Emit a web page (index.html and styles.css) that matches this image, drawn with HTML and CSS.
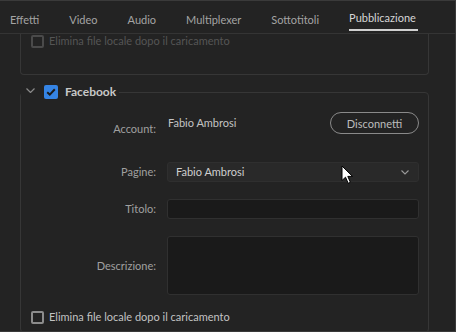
FILE: index.html
```html
<!DOCTYPE html>
<html lang="it">
  <head>
    <meta charset="UTF-8" />
    <title>Impostazioni esportazione</title>
    <link rel="stylesheet" href="styles.css">
  </head>
  <body>
    <div class="window">
      <nav class="tabs">
        <span class="tab">Effetti</span>
        <span class="tab">Video</span>
        <span class="tab">Audio</span>
        <span class="tab">Multiplexer</span>
        <span class="tab">Sottotitoli</span>
        <span class="tab active">Pubblicazione</span>
      </nav>

      <div class="content">
        <div class="group group-top">
          <label class="check-row disabled">
            <span class="box"></span>
            Elimina file locale dopo il caricamento
          </label>
        </div>

        <fieldset class="group">
          <legend>
            <svg class="chevron" width="9" height="5" viewBox="0 0 9 5">
              <path d="M0.5 0.5 L4.5 4.5 L8.5 0.5" fill="none" stroke="#8a8a8a" stroke-width="1.2" />
            </svg>
            <span class="box checked">
              <svg width="10" height="8" viewBox="0 0 10 8">
                <path d="M1.2 4.2 L3.8 6.6 L8.8 1.2" fill="none" stroke="#1b1b1b" stroke-width="2" />
              </svg>
            </span>
            <span class="legend-text">Facebook</span>
          </legend>

          <div class="form">
            <span class="label account">Account:</span>
            <div class="account-row">
              <span class="value">Fabio Ambrosi</span>
              <button class="pill">Disconnetti</button>
            </div>

            <span class="label">Pagine:</span>
            <div class="select">
              <span>Fabio Ambrosi</span>
              <svg width="8" height="5" viewBox="0 0 8 5">
                <path d="M0.5 0.5 L4 4 L7.5 0.5" fill="none" stroke="#9a9a9a" stroke-width="1.1" />
              </svg>
            </div>

            <span class="label">Titolo:</span>
            <div class="input"></div>

            <span class="label">Descrizione:</span>
            <div class="input textarea"></div>
          </div>

          <label class="check-row">
            <span class="box"></span>
            Elimina file locale dopo il caricamento
          </label>
        </fieldset>
      </div>

      <svg class="cursor" width="13" height="20" viewBox="0 0 13 20">
        <path d="M1 1 L1 15.5 L4.5 12.2 L7.2 18.3 L9.4 17.3 L6.8 11.4 L11.5 11.4 Z" fill="#fff" stroke="#000" stroke-width="1" stroke-linejoin="round" />
      </svg>
    </div>
  </body>
</html>
```

FILE: styles.css
```css
html,
body {
  margin: 0;
  padding: 0;
  background-color: #232323;
}
.window {
  position: relative;
  box-sizing: border-box;
  width: 456px;
  height: 332px;
  overflow: hidden;
  border: 1px solid #3a3a3a;
  border-left: none;
  font-family: Lato, "Open Sans", sans-serif;
  font-size: 11px;
  line-height: 14px;
  color: #a6a6a6;
}
.tabs {
  display: flex;
  gap: 29px;
  height: 32px;
  padding-left: 10px;
  border-bottom: 1px solid #343434;
}
.tab {
  display: flex;
  align-items: center;
  padding-top: 5px;
  padding-right: 1px;
  color: #a4a4a4;
}
.tab.active {
  color: #d6d6d6;
  box-shadow: inset 0 -2px 0 #d0d0d0;
  margin-bottom: 2px;
  padding: 3px 2px 0 0;
}
.content {
  padding: 0 26px 0 20px;
}
.group {
  margin: 0;
  padding: 0;
  border: 1px solid #363636;
  border-radius: 4px;
  min-width: 0;
}
.group-top {
  border-top: none;
  border-radius: 0 0 4px 4px;
  height: 40px;
  padding-left: 10px;
}
.check-row {
  display: flex;
  align-items: center;
  gap: 5px;
  height: 14px;
  color: #c2c2c2;
}
.check-row.disabled {
  color: #555;
}
.box {
  box-sizing: border-box;
  width: 13px;
  height: 13px;
  border: 2px solid #8c8c8c;
  border-radius: 2px;
}
.disabled .box {
  border-color: #4a4a4a;
}
fieldset.group {
  margin-top: 10px;
  padding: 0 9px 8px 0;
}
legend {
  display: flex;
  align-items: center;
  height: 14px;
  padding: 0 3px 0 5px;
  margin-left: 0;
}
.chevron {
  margin-right: 9px;
  margin-top: -3px;
}
.box.checked {
  width: 14px;
  height: 14px;
  border: none;
  background-color: #3584e4;
  display: flex;
  align-items: center;
  justify-content: center;
}
.legend-text {
  margin-left: 7px;
  font-size: 12px;
  font-weight: bold;
  color: #c8c8c8;
}
.form {
  display: grid;
  grid-template-columns: 135px 1fr;
  column-gap: 11px;
  row-gap: 17px;
  align-items: center;
  margin-top: 13px;
}
.label {
  text-align: right;
  color: #a0a0a0;
}
.account-row {
  display: flex;
  align-items: center;
  justify-content: space-between;
  height: 22px;
  margin-bottom: 11px;
}
.value {
  padding-left: 1px;
  color: #c4c4c4;
}
.pill {
  box-sizing: border-box;
  width: 89px;
  height: 22px;
  border: 1px solid #8a8a8a;
  border-radius: 11px;
  background: transparent;
  color: #bdbdbd;
  font-family: inherit;
  font-size: 11px;
  padding: 0;
}
.select {
  box-sizing: border-box;
  display: flex;
  align-items: center;
  justify-content: space-between;
  height: 20px;
  padding: 0 9px 0 8px;
  background-color: #292929;
  border: 1px solid #2f2f2f;
  border-radius: 3px;
  color: #cfcfcf;
}
.input {
  box-sizing: border-box;
  height: 20px;
  background-color: #1a1a1a;
  border: 1px solid #303030;
  border-radius: 3px;
}
.textarea {
  height: 59px;
}
fieldset .check-row {
  margin: 15px 0 0 10px;
}
.cursor {
  position: absolute;
  left: 341px;
  top: 164px;
}
```
